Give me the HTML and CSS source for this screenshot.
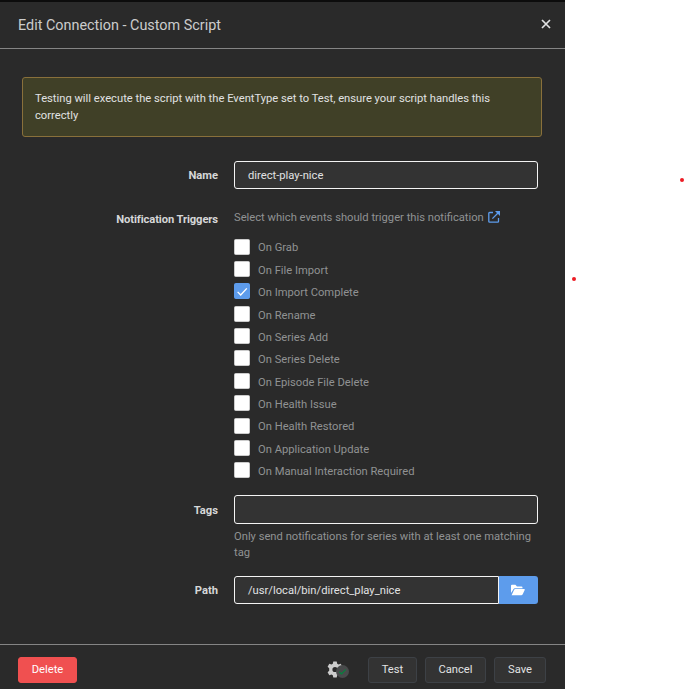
FILE: index.html
```
<!DOCTYPE html>
<html lang="en">
<head>
<meta charset="utf-8">
<title>Edit Connection - Custom Script</title>
<link rel="stylesheet" href="styles.css">
</head>
<body>
<div class="modal">
  <header class="header">
    <h1 class="title">Edit Connection - Custom Script</h1>
    <svg class="close" viewBox="0 0 10 10"><path d="M1 1 9 9M9 1 1 9"/></svg>
  </header>
  <main class="body">
    <div class="alert">Testing will execute the script with the EventType set to Test, ensure your script handles this correctly</div>
    <div class="group name">
      <label class="label">Name</label>
      <div class="input">direct-play-nice</div>
    </div>
    <div class="group triggers">
      <label class="label">Notification Triggers</label>
      <div class="field">
        <div class="help intro"><span class="intro-text">Select which events should trigger this notification</span>
          <svg class="external" viewBox="0 0 12 12"><path d="M5 1.5H1.600Q.8 1.500.8 2.300v8.100q0 .8.8.8h8.100q.8 0 .8-.8V7M4.400 7.600 10 2"/><path class="fill" d="M7 0h5v5L10.300 3.300 8.700 1.700z"/></svg>
        </div>
        <div class="events">
          <div class="event"><i class="box"></i><span>On Grab</span></div>
          <div class="event"><i class="box"></i><span>On File Import</span></div>
          <div class="event"><i class="box checked"><svg viewBox="0 0 16 16"><path d="m3 9 3.500 3.500 7-7.500"/></svg></i><span>On Import Complete</span></div>
          <div class="event"><i class="box"></i><span>On Rename</span></div>
          <div class="event"><i class="box"></i><span>On Series Add</span></div>
          <div class="event"><i class="box"></i><span>On Series Delete</span></div>
          <div class="event"><i class="box"></i><span>On Episode File Delete</span></div>
          <div class="event"><i class="box"></i><span>On Health Issue</span></div>
          <div class="event"><i class="box"></i><span>On Health Restored</span></div>
          <div class="event"><i class="box"></i><span>On Application Update</span></div>
          <div class="event"><i class="box"></i><span>On Manual Interaction Required</span></div>
        </div>
      </div>
    </div>
    <div class="group tags">
      <label class="label">Tags</label>
      <div class="field">
        <div class="input tall"></div>
        <div class="help tags-help">Only send notifications for series with at least one matching tag</div>
      </div>
    </div>
    <div class="group">
      <label class="label">Path</label>
      <div class="path">
        <div class="input path-input">/usr/local/bin/direct_play_nice</div>
        <div class="browse"><svg viewBox="0 0 14 12"><path d="M0 9V1.800Q0 .8 1 .8h3.400L6 2.400h4.500q1 0 1 1v.8H4q-1.100 0-1.600 1z"/><path d="M.6 11.200 3 6.100q.4-1 1.400-1h8.800q.9 0 .5.9l-2 4.200q-.5 1-1.500 1z"/></svg></div>
      </div>
    </div>
  </main>
  <footer class="footer">
    <div class="button danger">Delete</div>
    <div class="settings">
      <svg class="gear" viewBox="0 0 16 16"><path fill-rule="evenodd" d="M6.300 0h3.400l.5 2.200 1.300.8 2.200-.8 1.700 3L13.800 6.800v2.400l1.600 1.600-1.700 3-2.200-.8-1.300.8-.5 2.200H6.300l-.5-2.200-1.300-.8-2.200.8-1.700-3 1.600-1.600V6.800L.6 5.200l1.700-3 2.200.8 1.300-.8zM8 5.400a2.600 2.600 0 1 0 0 5.200 2.600 2.600 0 0 0 0-5.200"/></svg>
      <span class="status"><svg viewBox="0 0 12 12"><path d="m2.700 6.500 2.200 2.200 4.500-4.800"/></svg></span>
    </div>
    <div class="button test">Test</div>
    <div class="button cancel">Cancel</div>
    <div class="button save">Save</div>
  </footer>
</div>
<i class="dot dot-upper"></i>
<i class="dot dot-lower"></i>
</body>
</html>
```

FILE: styles.css
```
* { box-sizing: border-box; }
body { margin: 0; background: #fff; font: 11.2px/16px Roboto, sans-serif; }
svg { display: block; }
.modal { display: flex; flex-direction: column; width: 565px; height: 689px; background: #2a2a2a; color: #e1e2e3; border-top: 2px solid #0c0c0c; }
.header { display: flex; justify-content: space-between; align-items: center; height: 47px; padding: 0 14px 0 18px; border-bottom: 1px solid #858585; }
.title { margin: 2px 0 0; font-size: 14.4px; line-height: 20px; font-weight: 400; color: #ccc; }
.close { width: 10px; height: 10px; margin-bottom: 2px; fill: none; stroke: #e1e2e3; stroke-width: 1.7; }
.body { flex: 1; padding: 28px 27px 0 22px; }
.alert { width: 520px; height: 60px; padding: 12px; border: 1px solid #89703b; border-radius: 3px; background: #404027; line-height: 17px; }
.group { display: flex; }
.label { width: 196px; margin-right: 16px; padding-top: 7px; text-align: right; font-weight: 700; color: #d6d7d8; }
.field { width: 304px; }
.input { width: 304px; height: 28px; padding: 1px 13px 0; border: 1px solid #f4f4f4; border-radius: 3px; background: #333; line-height: 26px; }
.name { margin-top: 24px; }
.triggers { margin-top: 17px; }
.triggers .label { padding-top: 6px; letter-spacing: -.1px; }
.help { color: #909293; }
.intro { display: flex; align-items: center; gap: 4px; height: 16px; margin-top: 3px; white-space: nowrap; }
.intro-text { padding-top: 2px; }
.external { width: 12px; height: 12px; margin-bottom: 1px; fill: none; stroke: #5d9cec; stroke-width: 1.3; }
.external .fill { fill: #5d9cec; stroke: none; }
.events { margin-top: 10.7px; }
.event { display: flex; align-items: flex-start; height: 22.36px; color: #909293; }
.event span { margin-top: 4.75px; }
.box { width: 16px; height: 16px; margin: 3px 8px 0 0; border: 1px solid #ccc; border-radius: 1.6px; background: #fff; }
.box.checked { border-color: #5d9cec; background: #5d9cec; }
.box svg { width: 14px; height: 14px; fill: none; stroke: #fff; stroke-width: 1.6; }
.tags { height: 81px; margin-top: 13.3px; }
.tags .label { padding-top: 8px; }
.tall { height: 29px; }
.tags-help { margin-top: 5px; }
.path { display: flex; }
.path-input { width: 265px; border-radius: 3px 0 0 3px; }
.browse { display: grid; place-items: center; width: 39px; height: 28px; border-radius: 0 3px 3px 0; background: #5d9cec; }
.browse svg { width: 14px; height: 12px; margin-right: 1px; fill: #fff; }
.footer { display: flex; align-items: center; height: 45px; padding: 6px 19px 0 18px; border-top: 1px solid #858585; }
.button { display: flex; align-items: center; justify-content: center; height: 26px; border: 1px solid #3d4146; border-radius: 3px; background: #333; }
.danger { width: 59px; border-color: #f05050; background: #f05050; color: #fff; }
.settings { position: relative; width: 22px; height: 18px; margin-left: auto; }
.gear { width: 16px; height: 17px; fill: #ccc; }
.status { position: absolute; left: 9px; top: 4px; display: grid; place-items: center; width: 13px; height: 13px; border-radius: 50%; background: #484a4b; }
.status svg { width: 11px; height: 11px; fill: none; stroke: #00853d; stroke-width: 1.2; }
.test { width: 49px; margin-left: 19px; }
.cancel { width: 61px; margin-left: 8px; }
.save { width: 52px; margin-left: 8px; }
.dot { position: absolute; width: 4px; height: 4px; border-radius: 50%; background: #ed1c24; }
.dot-upper { left: 680px; top: 178px; }
.dot-lower { left: 572px; top: 277.4px; }
```
